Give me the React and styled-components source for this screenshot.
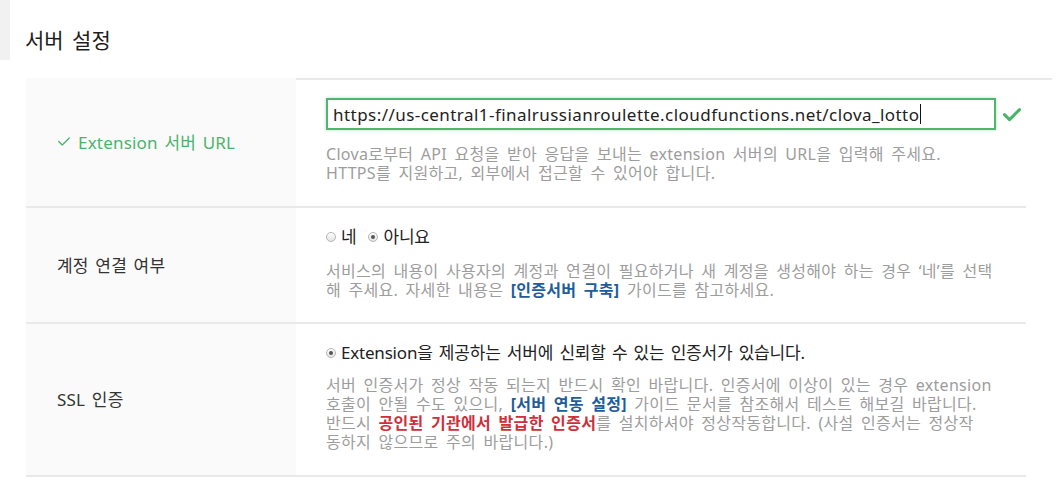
import styled, { createGlobalStyle } from 'styled-components'

const GlobalStyle = createGlobalStyle`
  html, body {
    margin: 0;
    padding: 0;
    background: #fff;
  }
  body {
    font-family: "Noto Sans", "Noto Sans CJK KR", sans-serif;
    color: #222;
  }
`

const Page = styled.div`
  width: 1058px;
  height: 504px;
  overflow: hidden;
  display: flex;
  flex-direction: column;
`

const Header = styled.div`
  display: flex;
  height: 60px;
`

const SideMark = styled.div`
  width: 10px;
  background: #f1f1f1;
`

const Title = styled.h2`
  margin: 0;
  padding: 26px 0 0 15px;
  font-size: 21px;
  font-weight: 400;
  letter-spacing: 0;
  word-spacing: 3px;
  color: #1e1e1e;
  line-height: 28px;
`

const Table = styled.div`
  margin: 18px 0 0 26px;
  width: 1000px;
`

const Row = styled.div`
  display: grid;
  grid-template-columns: 270px 1fr;
  border-bottom: 2px solid #e9e9e9;
  min-height: ${p => p.$h}px;
`

const Label = styled.div`
  background: #fafafa;
  display: flex;
  align-items: center;
  gap: 7px;
  padding-left: 31px;
  padding-bottom: 2px;
  font-size: 17px;
  letter-spacing: 0.2px;
  word-spacing: 2px;
  color: ${p => (p.$ok ? '#4bb46b' : '#333')};
`

const Cell = styled.div`
  padding: ${p => p.$pt}px 30px 0 30px;
  border-top: ${p => (p.$first ? '2px solid #e9e9e9' : 'none')};
`

const FieldLine = styled.div`
  display: flex;
  align-items: center;
  gap: 6px;
`

const UrlField = styled.div`
  width: 670px;
  height: 32px;
  box-sizing: border-box;
  border: 2px solid #52b46f;
  box-shadow: 0 0 3px rgba(82, 180, 111, 0.45);
  display: flex;
  align-items: center;
  padding-left: 5px;
  font-size: 17px;
  letter-spacing: 0.45px;
  color: #222;
  white-space: nowrap;
`

const Caret = styled.span`
  display: inline-block;
  width: 1px;
  height: 20px;
  background: #111;
  margin-left: 1px;
`

const Help = styled.p`
  margin: ${p => p.$mt}px 0 0 0;
  font-size: 16px;
  line-height: 19px;
  letter-spacing: 0.3px;
  word-spacing: 3px;
  color: #9d9d9d;
  white-space: nowrap;
`

const Link = styled.b`
  color: #1e5c9c;
  font-weight: 700;
`

const Warn = styled.b`
  color: #cf2f3a;
  font-weight: 700;
`

const Options = styled.div`
  display: flex;
  align-items: center;
  gap: 12px;
  font-size: 17px;
  letter-spacing: -0.2px;
  word-spacing: 2px;
  color: #222;
  line-height: 20px;
`

const Option = styled.label`
  display: flex;
  align-items: center;
  gap: 5px;
`

const Radio = styled.span`
  width: 10px;
  height: 10px;
  flex: none;
  box-sizing: border-box;
  border-radius: 50%;
  border: 1px solid #b5b5b5;
  background: linear-gradient(#fdfdfd, #e4e4e4);
  display: flex;
  align-items: center;
  justify-content: center;
  &::after {
    content: '';
    width: 4px;
    height: 4px;
    border-radius: 50%;
    background: ${p => (p.$on ? '#555' : 'transparent')};
  }
`

const Check = ({ size = 14, w = 1.6 }) => (
  <svg width={size} height={size} viewBox="0 0 16 16" fill="none">
    <path d="M2 8.5l4 4 8-8" stroke="#4bb46b" strokeWidth={w} strokeLinecap="round" strokeLinejoin="round" />
  </svg>
)

export default function App() {
  return (
    <Page>
      <GlobalStyle />
      <Header>
        <SideMark />
        <Title>서버 설정</Title>
      </Header>
      <Table>
        <Row $h={128}>
          <Label $ok>
            <Check size={14} w={1.5} />
            Extension 서버 URL
          </Label>
          <Cell $first $pt={18}>
            <FieldLine>
              <UrlField>
                https://us-central1-finalrussianroulette.cloudfunctions.net/clova_lotto
                <Caret />
              </UrlField>
              <Check size={20} w={2.4} />
            </FieldLine>
            <Help $mt={15}>
              Clova로부터 API 요청을 받아 응답을 보내는 extension 서버의 URL을 입력해 주세요.
              <br />
              HTTPS를 지원하고, 외부에서 접근할 수 있어야 합니다.
            </Help>
          </Cell>
        </Row>
        <Row $h={114}>
          <Label>계정 연결 여부</Label>
          <Cell $pt={19}>
            <Options>
              <Option>
                <Radio />네
              </Option>
              <Option>
                <Radio $on />아니요
              </Option>
            </Options>
            <Help $mt={15}>
              서비스의 내용이 사용자의 계정과 연결이 필요하거나 새 계정을 생성해야 하는 경우 ‘네’를 선택
              <br />
              해 주세요. 자세한 내용은 <Link>[인증서버 구축]</Link> 가이드를 참고하세요.
            </Help>
          </Cell>
        </Row>
        <Row $h={151}>
          <Label>SSL 인증</Label>
          <Cell $pt={19}>
            <Options>
              <Option>
                <Radio $on />Extension을 제공하는 서버에 신뢰할 수 있는 인증서가 있습니다.
              </Option>
            </Options>
            <Help $mt={13}>
              서버 인증서가 정상 작동 되는지 반드시 확인 바랍니다. 인증서에 이상이 있는 경우 extension
              <br />
              호출이 안될 수도 있으니, <Link>[서버 연동 설정]</Link> 가이드 문서를 참조해서 테스트 해보길 바랍니다.
              <br />
              반드시 <Warn>공인된 기관에서 발급한 인증서</Warn>를 설치하셔야 정상작동합니다. (사설 인증서는 정상작
              <br />
              동하지 않으므로 주의 바랍니다.)
            </Help>
          </Cell>
        </Row>
      </Table>
    </Page>
  )
}
